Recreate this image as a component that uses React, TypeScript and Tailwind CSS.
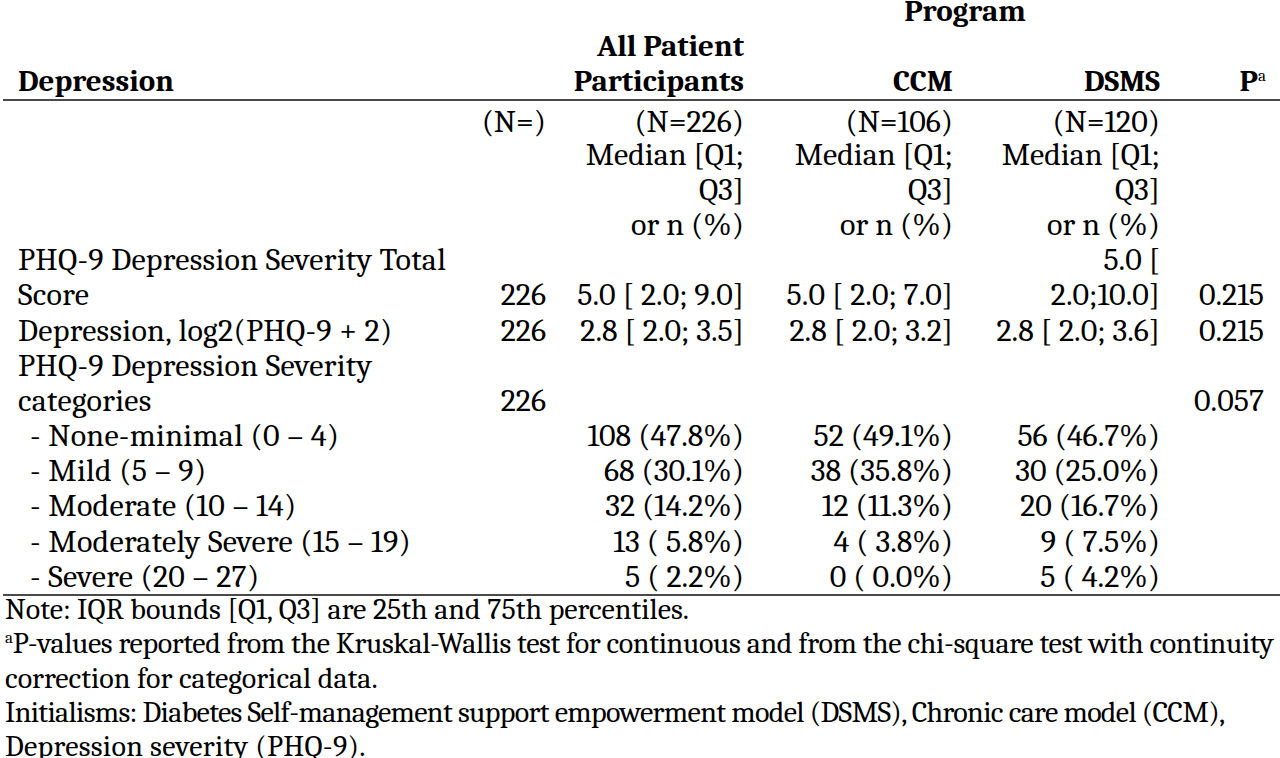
import React from "react";

type RowProps = {
  cells: (React.ReactNode | undefined)[];
  indent?: boolean;
  className?: string;
};

const GRID = "grid grid-cols-[452px_76px_198px_209px_207px_104px]";

function Row({ cells, indent, className = "h-[35.17px] leading-[35.17px]" }: RowProps) {
  const [label, n, all, ccm, dsms, p] = cells;
  return (
    <div className={`${GRID} whitespace-pre ${className}`}>
      <div className={`tracking-[0.3px] ${indent ? "pl-[12px]" : ""}`}>{label}</div>
      <div className="text-right">{n}</div>
      <div className="text-right">{all}</div>
      <div className="text-right">{ccm}</div>
      <div className="text-right">{dsms}</div>
      <div className="text-right">{p}</div>
    </div>
  );
}

export default function App() {
  return (
    <div className="w-[1280px] h-[758px] overflow-hidden bg-white text-black font-['Caladea','Liberation_Serif',serif]">
      <div className="pl-[18px] pr-[16px] text-[31px] font-bold">
        <div className={`${GRID} h-[29px] leading-[23px]`}>
          <div className="col-start-4 col-span-2 text-center pl-[26px]">Program</div>
        </div>
        <div className={`${GRID} h-[35.17px] leading-[35.17px]`}>
          <div className="col-start-3 text-right">All Patient</div>
        </div>
        <div className={`${GRID} h-[35.17px] leading-[35.17px]`}>
          <div>Depression</div>
          <div />
          <div className="text-right">Participants</div>
          <div className="text-right">CCM</div>
          <div className="text-right">DSMS</div>
          <div className="text-right -mr-[2px]">
            P<span className="text-[17px] font-normal leading-none relative -top-[10px]">a</span>
          </div>
        </div>
      </div>
      <div className="ml-[3px] h-[2px] bg-[#4a4a4a]" />
      <div className="pl-[18px] pr-[16px] text-[32px]">
        <Row
          className="h-[35.5px] pt-[6px] leading-[29.5px]"
          cells={["", "(N=)", "(N=226)", "(N=106)", "(N=120)", ""]}
        />
        <Row cells={["", "", "Median [Q1;", "Median [Q1;", "Median [Q1;", ""]} />
        <Row cells={["", "", "Q3]", "Q3]", "Q3]", ""]} />
        <Row cells={["", "", "or n (%)", "or n (%)", "or n (%)", ""]} />
        <Row cells={["PHQ-9 Depression Severity Total", "", "", "", "5.0 [", ""]} />
        <Row cells={["Score", "226", "5.0 [ 2.0; 9.0]", "5.0 [ 2.0; 7.0]", "2.0;10.0]", "0.215"]} />
        <Row cells={["Depression, log2(PHQ-9 + 2)", "226", "2.8 [ 2.0; 3.5]", "2.8 [ 2.0; 3.2]", "2.8 [ 2.0; 3.6]", "0.215"]} />
        <Row cells={["PHQ-9 Depression Severity", "", "", "", "", ""]} />
        <Row cells={["categories", "226", "", "", "", "0.057"]} />
        <Row indent cells={["- None-minimal (0 – 4)", "", "108 (47.8%)", "52 (49.1%)", "56 (46.7%)", ""]} />
        <Row indent cells={["- Mild (5 – 9)", "", "68 (30.1%)", "38 (35.8%)", "30 (25.0%)", ""]} />
        <Row indent cells={["- Moderate (10 – 14)", "", "32 (14.2%)", "12 (11.3%)", "20 (16.7%)", ""]} />
        <Row indent cells={["- Moderately Severe (15 – 19)", "", "13 ( 5.8%)", "4 ( 3.8%)", "9 ( 7.5%)", ""]} />
        <Row indent cells={["- Severe (20 – 27)", "", "5 ( 2.2%)", "0 ( 0.0%)", "5 ( 4.2%)", ""]} />
      </div>
      <div className="ml-[3px] h-[2px] bg-[#4a4a4a]" />
      <div className="-mt-[3px] pl-[5px] text-[30px] leading-[34.4px] whitespace-nowrap">
        <div className="h-[34.4px]">Note: IQR bounds [Q1, Q3] are 25th and 75th percentiles.</div>
        <div className="h-[34.4px] tracking-[-0.36px]">
          <span className="text-[17px] leading-none relative -top-[10px]">a</span>P-values reported from the Kruskal-Wallis test for continuous and from the chi-square test with continuity
        </div>
        <div className="h-[34.4px]">correction for categorical data.</div>
        <div className="h-[34.4px] tracking-[-0.66px]">
          Initialisms: Diabetes Self-management support empowerment model (DSMS), Chronic care model (CCM),
        </div>
        <div className="h-[34.4px] tracking-[0.3px]">Depression severity (PHQ-9).</div>
      </div>
    </div>
  );
}
